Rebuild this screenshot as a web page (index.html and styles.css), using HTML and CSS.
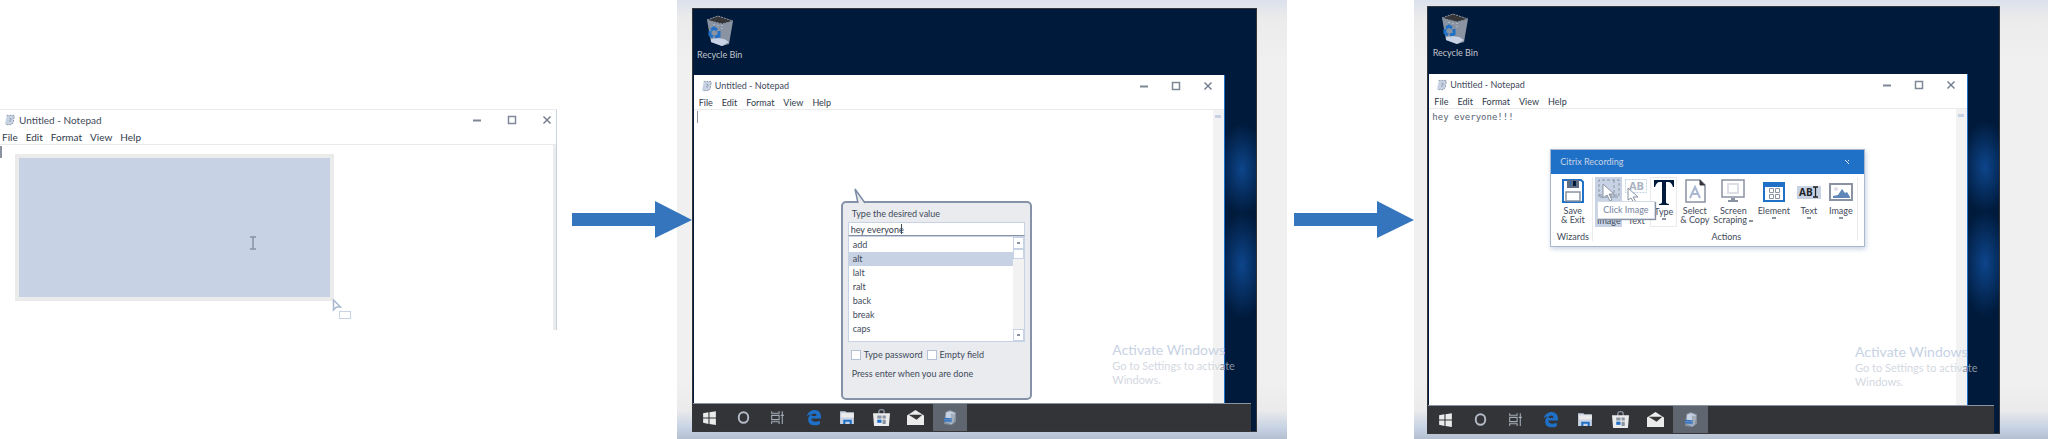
FILE: index.html
```html
<!DOCTYPE html>
<html lang="en">
<head>
<meta charset="utf-8">
<title>Recording steps</title>
<link rel="stylesheet" href="styles.css">
</head>
<body>
<svg class="defs" aria-hidden="true">
  <symbol id="note" viewBox="0 0 12 12"><path d="M3 1h8l-1 8-2 2H1z" fill="#c7d2e4"/><path d="M3 1h8v2M11 3l-1 6-2 2H2" fill="none" stroke="#8993a1" stroke-dasharray="2 1"/><path d="M6 4l2 1-2 2 1 1" fill="none" stroke="#8993a1"/></symbol>
  <symbol id="pad" viewBox="0 0 16 16"><path d="M4 3l4-2 6 2v9l-4 3-7-1z" fill="#8993a1"/><path d="M5 3l4-1 4 2-1 8-2 2-6-2z" fill="#c7d2e4"/><path d="M9 4l4 1-1 7-2 2z" fill="#a4adba"/><path d="M3 8l7 1v4l-7-1z" fill="#5e86b8"/><path d="M3 9h7M3 11h7" stroke="#1f71c8" stroke-dasharray="2 1"/></symbol>
  <symbol id="bin" viewBox="0 0 28 32"><path d="M1 5 12 1l15 5-4 23-7 2-11-4z" fill="#8993a1"/><path d="M1 5 12 1l15 5-11 3z" fill="#363638" stroke="#8993a1" stroke-dasharray="2 1"/><path d="M5 24l6-1 7 1 5 3-7 4-11-4z" fill="#c7d2e4"/><path d="M8 9v4M12 10v3M16 10v4" stroke="#c7d2e4" stroke-dasharray="1 2"/><path d="M5 15l3-2 3 2M4 16v4l3 2M9 22l4-1v-5" fill="none" stroke="#1f71c8" stroke-width="3"/></symbol>
  <symbol id="min" viewBox="0 0 10 10"><path d="M1 5.500h8" stroke="#7d8796" stroke-width="2"/></symbol>
  <symbol id="max" viewBox="0 0 10 10"><rect x="1.500" y="1.500" width="7" height="7" fill="none" stroke="#7d8796" stroke-width="1.500"/></symbol>
  <symbol id="close" viewBox="0 0 10 10"><path d="M1.500 1.500l7 7m0-7l-7 7" stroke="#6f7a8a" stroke-width="1.400"/></symbol>
  <symbol id="win" viewBox="0 0 16 16"><path d="M2 4l5-1v5H2zM8 3l6-1v6H8zM2 9h5v5l-5-1zM8 9h6v6l-6-1z" fill="#ebebeb"/></symbol>
  <symbol id="ring" viewBox="0 0 16 16"><ellipse cx="8" cy="8" rx="4.500" ry="5" fill="none" stroke="#b4bcc8" stroke-width="1.800"/></symbol>
  <symbol id="tasks" viewBox="0 0 16 16"><path d="M2.500 2v2h7V2M2.500 14v-2h7v2M2.500 6h7v4h-7zM12.500 2v12M11 6h3" fill="none" stroke="#a4acb8"/></symbol>
  <symbol id="edge" viewBox="0 0 16 16"><path d="M1.500 7.500C2.500 3 6 1 9 1c4 0 6 3 6 6v2H6c0 3 4 4 8 2v3c-5 3-11 1-11-4 0-3 2-5 4-5-3 0-4.500 1-5.500 2.500zM6.200 6.600h4.600c0-3-4.200-3-4.600 0z" fill="#1f71c8" fill-rule="evenodd"/></symbol>
  <symbol id="folder" viewBox="0 0 16 16"><path d="M1 2h5l1 1h7v11H1z" fill="#c7d2e4"/><path d="M2 4h12v4H2z" fill="#ebebeb"/><path d="M4 14v-4h8v4h-2v-2H6v2z" fill="#1f71c8"/></symbol>
  <symbol id="store" viewBox="0 0 16 16"><path d="M5.500 5V2.500C5.500 0 10.500 0 10.500 2.500V5" fill="none" stroke="#8993a1" stroke-width="1.300"/><path d="M0 4h16l-1 12H1z" fill="#ebebeb"/><path d="M4 6h4v3H4zM9 6h3v3H9zM9 10h3v4H9z" fill="#8993a1"/><path d="M4 10h4v3H4z" fill="#1f71c8"/></symbol>
  <symbol id="mail" viewBox="0 0 16 16"><path d="M0 6l8-5 8 5v9H0z" fill="#ebebeb"/><path d="M1.500 5.500h13L9 10z" fill="#363638"/></symbol>
</svg>

<main class="steps">
  <section class="notepad notepad-first">
    <header class="titlebar"><svg class="note"><use href="#note"/></svg><h2>Untitled - Notepad</h2>
      <div class="controls"><button aria-label="Minimize"><svg><use href="#min"/></svg></button><button aria-label="Maximize"><svg><use href="#max"/></svg></button><button aria-label="Close"><svg><use href="#close"/></svg></button></div></header>
    <nav class="menubar"><button>File</button><button>Edit</button><button>Format</button><button>View</button><button>Help</button></nav>
    <div class="editor">
      <div class="caret"></div>
      <div class="selection"></div>
      <svg class="ibeam" viewBox="0 0 6 14"><path d="M0 1h6M3 1v12M0 13h6" stroke="#8993a1" stroke-width="1.500"/></svg>
      <svg class="pointer" viewBox="0 0 20 22"><path d="M1.500 1v10l3-3h4z" fill="#fff" stroke="#a9b8cf" stroke-width="1.500"/><rect x="7.500" y="12.500" width="11" height="7" fill="#fff" stroke="#c7d2e4"/></svg>
    </div>
  </section>

  <div class="arrow arrow-a"><svg viewBox="0 0 120 38" preserveAspectRatio="none"><path d="M0 12h83V0l37 19-37 18V25H0z" fill="#3575be"/></svg></div>

  <section class="screen screen-a">
    <div class="desktop">
      <div class="shortcuts"><div class="shortcut"><svg><use href="#bin"/></svg><span>Recycle Bin</span></div></div>
      <div class="notepad">
        <header class="titlebar"><svg class="note"><use href="#note"/></svg><h2>Untitled - Notepad</h2>
          <div class="controls"><button aria-label="Minimize"><svg><use href="#min"/></svg></button><button aria-label="Maximize"><svg><use href="#max"/></svg></button><button aria-label="Close"><svg><use href="#close"/></svg></button></div></header>
        <nav class="menubar"><button>File</button><button>Edit</button><button>Format</button><button>View</button><button>Help</button></nav>
        <div class="editor"><div class="caret"></div><div class="scrollbar"><i></i></div></div>
      </div>
      <nav class="taskbar">
        <button aria-label="Start"><svg><use href="#win"/></svg></button><button aria-label="Cortana"><svg><use href="#ring"/></svg></button><button aria-label="Task view"><svg><use href="#tasks"/></svg></button><button aria-label="Edge"><svg><use href="#edge"/></svg></button><button aria-label="Explorer"><svg><use href="#folder"/></svg></button><button aria-label="Store"><svg><use href="#store"/></svg></button><button aria-label="Mail"><svg><use href="#mail"/></svg></button><button class="active" aria-label="Notepad"><svg><use href="#pad"/></svg></button>
      </nav>
      <aside class="watermark"><strong>Activate Windows</strong><p>Go to Settings to activ<b>ate</b><br>Windows.</p></aside>
      <form class="popup">
        <svg class="tail" viewBox="0 0 14 16"><path d="M4 15 1 1l10 14" fill="#ebebeb" stroke="#7d8da6" stroke-width="1.500"/></svg>
        <label for="value">Type the desired value</label>
        <input id="value" class="value" type="text" value="hey everyone">
        <div class="keys">
          <ul><li>add</li><li class="picked">alt</li><li>lalt</li><li>ralt</li><li>back</li><li>break</li><li>caps</li></ul>
          <div class="keyscroll"><button type="button" aria-label="Up"><i></i></button><span></span><button type="button" aria-label="Down"><i class="down"></i></button></div>
        </div>
        <div class="options"><label><input type="checkbox">Type password</label><label><input type="checkbox">Empty field</label></div>
        <p>Press enter when you are done</p>
        <div class="value-caret"></div>
      </form>
    </div>
  </section>

  <div class="arrow arrow-b"><svg viewBox="0 0 120 38" preserveAspectRatio="none"><path d="M0 12h83V0l37 19-37 18V25H0z" fill="#3575be"/></svg></div>

  <section class="screen screen-b">
    <div class="desktop">
      <div class="shortcuts"><div class="shortcut"><svg><use href="#bin"/></svg><span>Recycle Bin</span></div></div>
      <div class="notepad">
        <header class="titlebar"><svg class="note"><use href="#note"/></svg><h2>Untitled - Notepad</h2>
          <div class="controls"><button aria-label="Minimize"><svg><use href="#min"/></svg></button><button aria-label="Maximize"><svg><use href="#max"/></svg></button><button aria-label="Close"><svg><use href="#close"/></svg></button></div></header>
        <nav class="menubar"><button>File</button><button>Edit</button><button>Format</button><button>View</button><button>Help</button></nav>
        <div class="editor"><p class="typed">hey everyone!!!</p><div class="scrollbar"><i></i></div></div>
      </div>
      <nav class="taskbar">
        <button aria-label="Start"><svg><use href="#win"/></svg></button><button aria-label="Cortana"><svg><use href="#ring"/></svg></button><button aria-label="Task view"><svg><use href="#tasks"/></svg></button><button aria-label="Edge"><svg><use href="#edge"/></svg></button><button aria-label="Explorer"><svg><use href="#folder"/></svg></button><button aria-label="Store"><svg><use href="#store"/></svg></button><button aria-label="Mail"><svg><use href="#mail"/></svg></button><button class="active" aria-label="Notepad"><svg><use href="#pad"/></svg></button>
      </nav>
      <aside class="watermark"><strong>Activate Windows</strong><p>Go to Settings to activ<b>ate</b><br>Windows.</p></aside>
      <section class="recorder">
        <header><h3>Citrix Recording</h3><button aria-label="Close"><svg viewBox="0 0 6 6"><path d="M1 1l4 4M4 1l1 1" stroke="#ebebeb"/></svg></button></header>
        <div class="ribbon">
          <div class="group">
            <div class="tools"><button><svg viewBox="0 0 24 26"><path d="M2 2h18l2 2v20H2z" fill="#fff" stroke="#1f71c8" stroke-width="2"/><path d="M6 2h12v8H6z" fill="#5f6e82"/><path d="M12 3h3v5h-3z" fill="#001a3b"/><path d="M9 3h1v5H9z" fill="#1f71c8"/><path d="M5 14h14v9H5z" fill="#fff" stroke="#8993a1" stroke-width="1.500"/></svg><span>Save<br>&amp; Exit</span></button></div>
            <h4>Wizards</h4>
          </div>
          <div class="group actions">
            <div class="tools">
              <button class="lit"><svg viewBox="0 0 24 26"><path d="M2 19V2h20v17zM17 2v18M2 17h20" fill="none" stroke="#8993a1" stroke-dasharray="3 2"/><path d="M6 6v14l4-3 3 6 2-1-3-6h5z" fill="#fff" stroke="#8993a1"/></svg><span class="under">Image</span></button>
              <button><svg viewBox="0 0 24 26"><rect x="1.500" y="1.500" width="21" height="13" fill="none" stroke="#c7d2e4" stroke-dasharray="2 1"/><text x="5" y="12" class="ab">AB</text><path d="M4 10v12l3-2 3 5 2-1-3-5h5z" fill="#fff" stroke="#8993a1"/></svg><span class="under">Text</span></button>
              <button class="type"><svg viewBox="0 0 24 26"><path d="M2 1h20v7h-1c-1-3-2-5-5-5h-2v20c0 1 1 2 3 2v1H7v-1c2 0 3-1 3-2V3H8C5 3 4 5 3 8H2z" fill="#001a3b"/></svg><span>Type</span><i></i></button>
              <button><svg viewBox="0 0 24 26"><path d="M3 2h14l5 5v17H3z" fill="#fff" stroke="#8993a1" stroke-width="1.500"/><path d="M17 2v5h5" fill="#363638" stroke="#363638"/><path d="M7 20l5-11 5 11M9 16h6" fill="none" stroke="#a9b8cf" stroke-width="2"/></svg><span>Select<br>&amp; Copy</span></button>
              <button><svg viewBox="0 0 24 26"><rect x="1" y="2" width="22" height="17" fill="#fff" stroke="#8993a1" stroke-width="1.500"/><rect x="7" y="6" width="10" height="9" fill="none" stroke="#dcdfe5" stroke-width="2"/><path d="M10 20h4v2h3v2H7v-2h3z" fill="#8993a1"/></svg><span>Screen<br>Scraping <i></i></span></button>
              <button><svg viewBox="0 0 24 26"><path d="M1 4h22v20H1z" fill="#1f71c8"/><path d="M3 9h18v13H3z" fill="#fff"/><path d="M7.500 10.500h4v4h-4zM13.500 10.500h4v4h-4zM7.500 16.500h4v4h-4zM13.500 16.500h4v4h-4z" fill="none" stroke="#8993a1"/></svg><span>Element</span><i></i></button>
              <button><svg viewBox="0 0 24 26"><path d="M0 8h24v13H0z" fill="#c7d2e4"/><text x="2" y="18" class="abi">AB</text><path d="M16 9h5M18.500 9v10M16 19h5" stroke="#222" stroke-width="1.300"/></svg><span>Text</span><i></i></button>
              <button><svg viewBox="0 0 24 26"><rect x="1" y="6" width="22" height="16" fill="#fff" stroke="#8993a1" stroke-width="2"/><path d="M4 20v-2l5-1 4-6 3 4 2-1 3 5v1z" fill="#5e86b8"/><circle cx="7" cy="11" r="2" fill="#dcdfe5"/></svg><span>Image</span><i></i></button>
            </div>
            <h4>Actions</h4>
          </div>
        </div>
        <div class="tooltip" role="tooltip">Click Image</div>
      </section>
    </div>
  </section>
</main>
</body>
</html>
```
FILE: styles.css
```css
* { box-sizing: border-box; }
body { margin: 0; background: #fff; color: #3f4a5a; font: 9px/12px Lato, "Open Sans", sans-serif; }
h2, h3, h4, p, ul { margin: 0; padding: 0; font: inherit; list-style: none; }
button { padding: 0; border: 0; background: none; color: inherit; font: inherit; }
svg { display: block; }
.defs { position: absolute; width: 0; height: 0; }

.steps { display: grid; grid-template-columns: 557fr 119fr 611fr 127fr 634fr; min-height: 100vh; }

.notepad { display: flex; flex-direction: column; background: #fff; }
.notepad-first { align-self: center; height: 50vh; min-height: 221px; border-top: 1px solid #ebebeb; border-right: 1px solid #c7d2e4; font-size: 10px; }
.titlebar { display: flex; align-items: center; height: 21px; padding-left: 7px; }
.titlebar h2 { margin-left: 3px; }
.note { width: 11px; height: 12px; }
.controls { display: flex; gap: 22px; margin-left: auto; padding-right: 11px; }
.controls svg { width: 10px; height: 10px; }
.menubar { display: flex; gap: 9px; height: 13px; padding-left: 5px; align-items: center; color: #2f3a4a; }
.editor { position: relative; display: flex; flex: 1; border-top: 1px solid #ebebeb; }
.caret { width: 1px; height: 12px; margin: 1px 0 0 3px; background: #8993a1; }
.scrollbar { width: 11px; margin-left: auto; background: #f2f2f2; }
.scrollbar i { display: block; width: 6px; height: 3px; margin: 5px 2px; background: #c7d2e4; }
.typed { padding: 1px 3px; color: #566273; font: 9px/14px "DejaVu Sans Mono", monospace; }

.notepad-first .titlebar { height: 19px; padding-left: 4px; }
.notepad-first .titlebar h2 { margin-left: 4px; }
.notepad-first .controls { gap: 25px; padding-right: 4px; }
.notepad-first .menubar { gap: 8px; height: 15px; padding-left: 2px; }
.notepad-first .caret { width: 2px; margin-left: 0; }
.notepad-first .editor { border-right: 3px solid #ebebeb; }
.selection { position: absolute; left: 15px; top: 9px; width: 319px; height: 147px; border: 4px solid #ebebeb; background: #c7d2e4; }
.ibeam { position: absolute; left: 250px; top: 91px; width: 6px; height: 14px; }
.pointer { position: absolute; left: 332px; top: 154px; width: 20px; height: 22px; }

.arrow { z-index: 2; display: flex; align-items: center; }
.arrow svg { flex: 1; height: 38px; }
.arrow-a { margin: 0 -15px 0 15px; }
.arrow-b { padding-left: 7px; }

.screen { display: flex; background: linear-gradient(#dbe1ec 0, #ebebeb 18px, #f0f0f0 60px, #f0f0f0 380px, #ebebeb 410px, #c7d2e4 428px, #b4bfd0 100%); }
.screen-a { padding: 8px 30px 7px 15px; }
.screen-b { padding: 6px 48px 5px 13px; }
.desktop { position: relative; display: flex; flex: 1; flex-direction: column; border: 1px solid #363638; background: radial-gradient(ellipse 24px 46px at calc(100% - 14px) 160px, #0d458b, transparent), radial-gradient(ellipse 24px 54px at calc(100% - 14px) 256px, #0d458b, transparent), #001a3b; }
.shortcuts { height: 66px; padding: 6px 0 0 5px; }
.screen-b .shortcuts { height: 67px; }
.shortcut { display: flex; flex-direction: column; align-items: center; width: 44px; color: #c0c4ca; white-space: nowrap; }
.shortcut svg { width: 28px; height: 32px; margin-bottom: 2px; }
.desktop .notepad { flex: 1; margin: 0 31px 0 1px; border-right: 1px solid #1f71c8; }
.taskbar { display: flex; height: 28px; margin-right: 5px; background: #323437; border-top: 1px solid #8993a1; }
.taskbar button { display: grid; place-items: center; width: 34px; }
.screen-b .taskbar button { width: 35px; }
.taskbar button:nth-child(4) { margin-left: 2px; }
.screen-b .taskbar button:nth-child(4) { margin-left: 0; }
.taskbar svg { width: 17px; height: 17px; }
.taskbar .active { background: #60666f; }
.watermark { position: absolute; right: 25px; bottom: 44px; width: 119px; color: #d3d8e1; font-size: 11px; line-height: 14px; white-space: nowrap; }
.watermark strong { display: block; color: #c7d2e4; font-size: 14px; font-weight: 400; line-height: 18px; }
.watermark b { color: #8993a1; font-weight: 400; }

.popup { position: absolute; left: 148px; top: 192px; width: 191px; height: 199px; padding: 5px; border: 2px solid #8592a8; border-radius: 5px; background: #e9ebee; }
.popup > label, .popup > p { display: block; margin-left: 4px; }
.tail { position: absolute; left: 11px; top: -15px; width: 14px; height: 16px; }
.value { display: block; width: 100%; height: 14px; margin-top: 2px; padding: 0 2px; border: 1px solid #c7d2e4; border-bottom-color: #8993a1; background: #fff; color: #2f3a4a; font: inherit; }
.value-caret { position: absolute; left: 58px; top: 21px; width: 1px; height: 10px; background: #3f4a5a; }
.keys { display: flex; height: 106px; border: 1px solid #c7d2e4; background: #fff; }
.keys ul { flex: 1; padding-top: 1px; }
.keys li { padding-left: 4px; line-height: 14px; }
.keys .picked { background: #c7d2e4; }
.keyscroll { display: flex; flex-direction: column; width: 11px; background: #f2f2f2; }
.keyscroll button { display: grid; place-items: center; height: 12px; border: 1px solid #c7d2e4; background: #fff; }
.keyscroll span { height: 10px; margin-bottom: auto; border: 1px solid #c7d2e4; background: #fff; }
.keyscroll i { width: 3px; height: 2px; background: #8993a1; }
.options { display: flex; gap: 4px; margin: 7px 3px; }
.options label { display: flex; align-items: center; gap: 3px; }
.options input { width: 10px; height: 10px; margin: 0; appearance: none; border: 1px solid #b4c1d6; background: #fff; }

.recorder { position: absolute; left: 122px; top: 142px; width: 315px; border: 1px solid #a9b8cf; background: #fff; box-shadow: 1px 2px 5px #c7d2e4; }
.recorder header { display: flex; align-items: center; justify-content: space-between; height: 24px; padding: 0 14px 0 9px; background: #1f71c8; color: #c7d2e4; }
.recorder header svg { width: 6px; height: 6px; }
.ribbon { display: flex; height: 72px; padding: 3px 6px 5px 2px; line-height: 9px; }
.group { display: flex; flex-direction: column; justify-content: space-between; width: 40px; border-right: 1px solid #ebebeb; text-align: center; }
.group.actions { flex: 1; padding-left: 2px; }
.tools { display: grid; grid-template-columns: 1fr; }
.actions .tools { grid-template-columns: 27fr 28fr 27fr 35fr 42fr 39fr 31fr 33fr; }
.tools button { display: flex; flex-direction: column; align-items: center; justify-content: flex-start; height: 50px; white-space: nowrap; }
.tools svg { width: 24px; height: 28px; margin-bottom: 1px; flex: none; }
.tools .lit { background: #c7d2e4; }
.tools .type { border: 1px solid #ebebeb; }
.tools .under { padding-top: 10px; }
.tools i { display: inline-block; width: 4px; height: 2px; margin-top: 2px; background: #8993a1; vertical-align: middle; }
.tools span i { margin-top: 0; }
.ab { fill: #a9b2bf; font: 700 11px "Open Sans", sans-serif; }
.abi { fill: #222; font: 700 10px "Open Sans", sans-serif; }
.tooltip { position: absolute; left: 46px; top: 51px; padding: 2px 5px; border: 1px solid #d3dae6; background: #fff; box-shadow: 1px 1px 1px #8993a1; color: #7483a0; white-space: nowrap; }
```
